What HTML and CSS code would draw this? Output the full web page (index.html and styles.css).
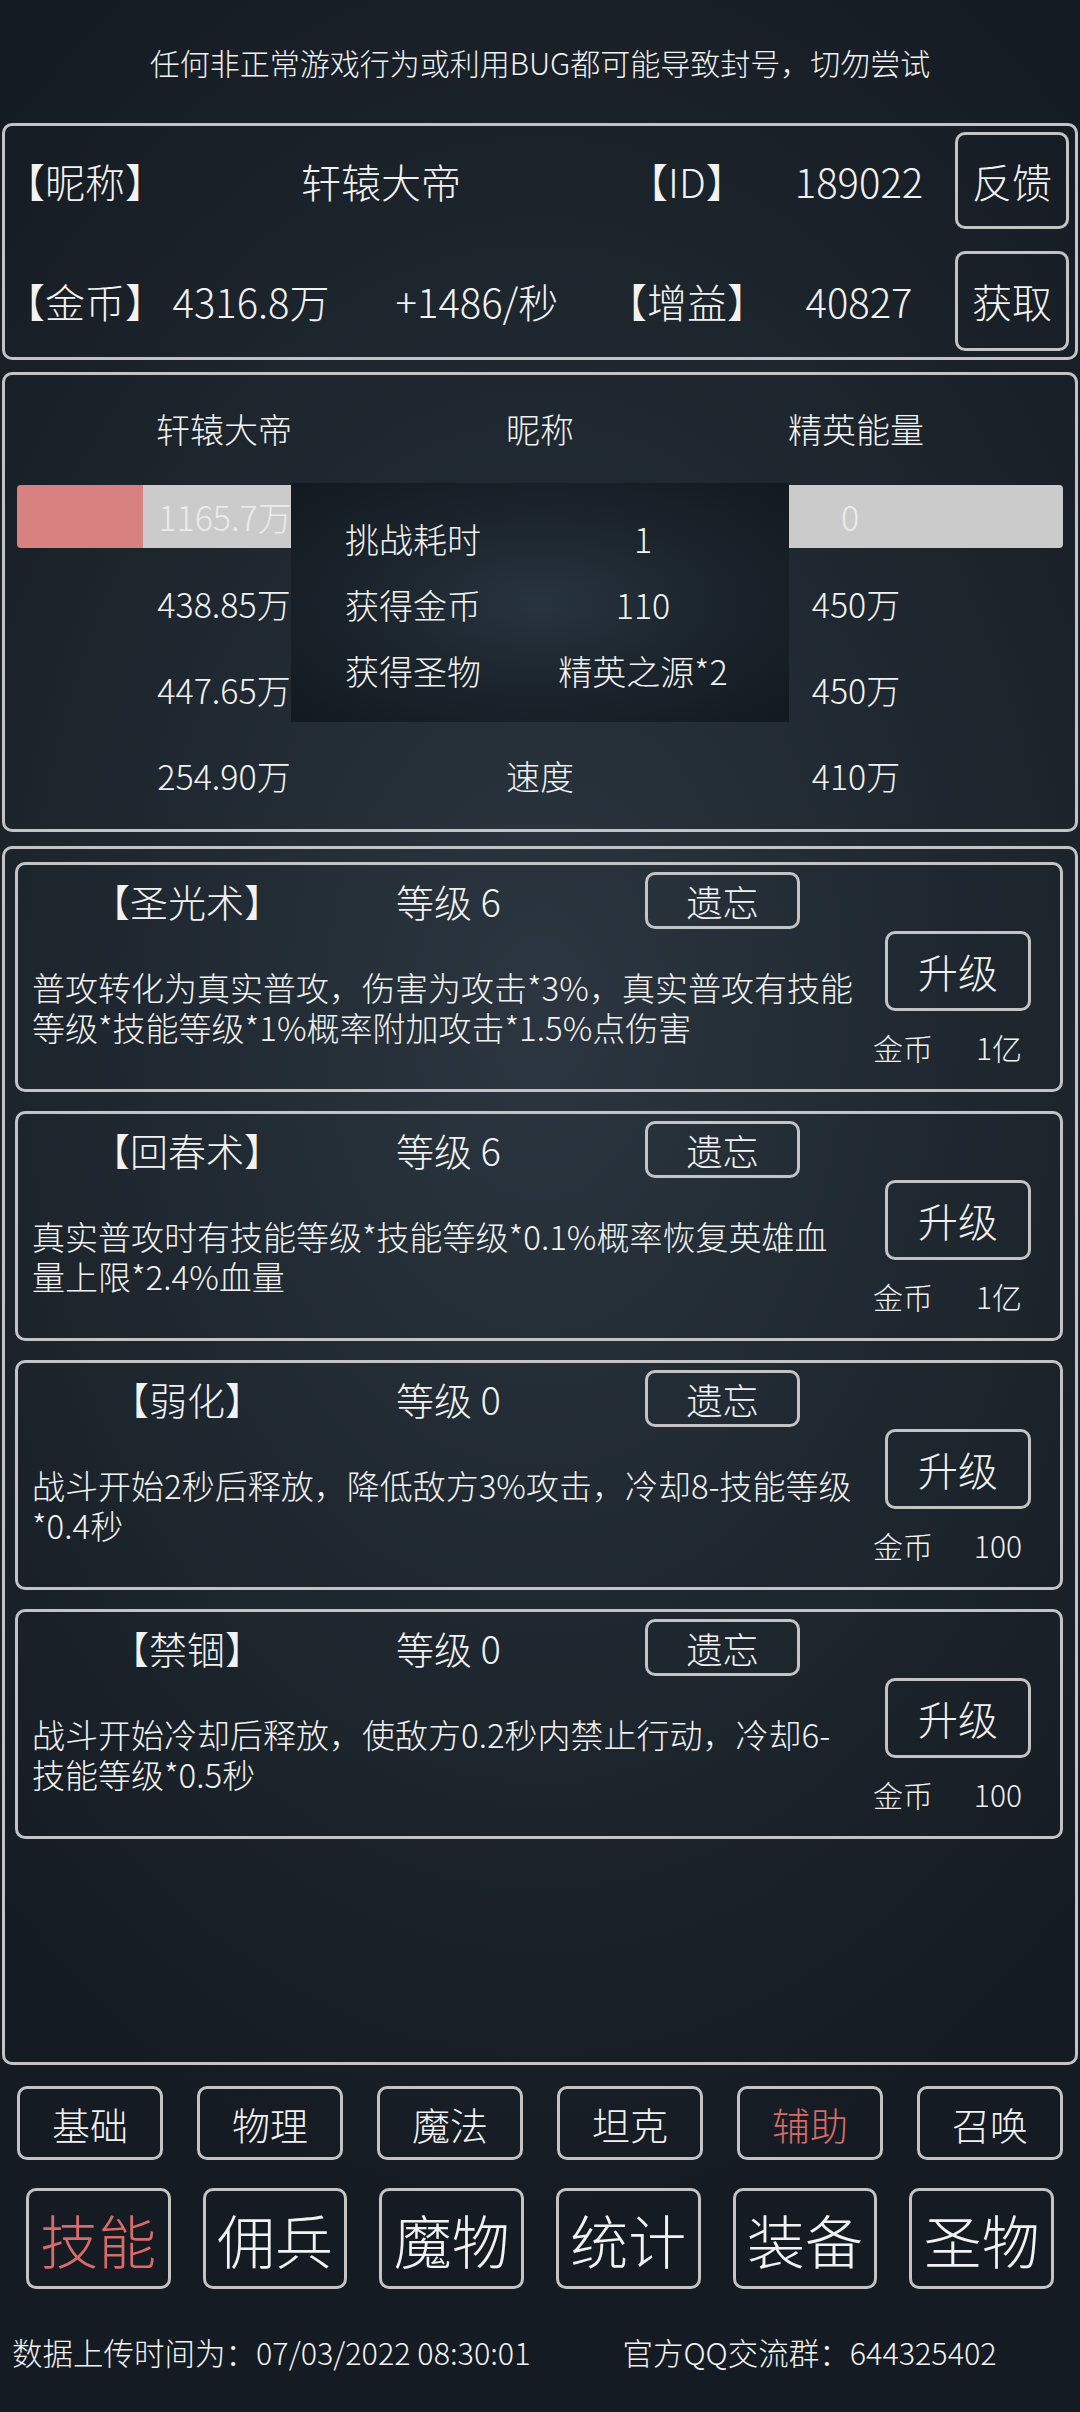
FILE: index.html
```html
<!DOCTYPE html>
<html lang="zh-CN">

<head>
  <meta charset="UTF-8" />
  <meta name="viewport" content="width=device-width, initial-scale=1" />
  <title>技能</title>
  <link rel="stylesheet" href="styles.css">
</head>

<body>
  <p class="notice">任何非正常游戏行为或利用BUG都可能导致封号，切勿尝试</p>

  <section class="panel info">
    <span>【昵称】</span>
    <span class="wide">轩辕大帝</span>
    <span>【ID】</span>
    <span>189022</span>
    <button class="btn side-btn">反馈</button>
    <span>【金币】</span>
    <span>4316.8万</span>
    <span>+1486/秒</span>
    <span>【增益】</span>
    <span>40827</span>
    <button class="btn side-btn">获取</button>
  </section>

  <section class="panel battle">
    <span class="head">轩辕大帝</span>
    <span class="head">昵称</span>
    <span class="head">精英能量</span>

    <div class="bar bar-left"><span>1165.7万</span></div>
    <div></div>
    <div class="bar bar-right"><span>0</span></div>

    <span>438.85万</span>
    <span></span>
    <span>450万</span>
    <span>447.65万</span>
    <span></span>
    <span>450万</span>
    <span>254.90万</span>
    <span>速度</span>
    <span>410万</span>

    <div class="result">
      <span class="label">挑战耗时</span>
      <span class="value">1</span>
      <span class="label">获得金币</span>
      <span class="value">110</span>
      <span class="label">获得圣物</span>
      <span class="value">精英之源*2</span>
    </div>
  </section>

  <section class="panel skills">
    <div class="skill">
      <div class="skill-main">
        <div class="skill-head">
          <span class="skill-name">【圣光术】</span>
          <span class="skill-level">等级 6</span>
          <button class="btn forget">遗忘</button>
        </div>
        <p class="skill-desc"><span>普攻转化为真实普攻，伤害为攻击*3%，真实普攻有技能</span><span>等级*技能等级*1%概率附加攻击*1.5%点伤害</span></p>
      </div>
      <div class="skill-side">
        <button class="btn upgrade">升级</button>
        <div class="cost"><span>金币</span><span>1亿</span></div>
      </div>
    </div>

    <div class="skill">
      <div class="skill-main">
        <div class="skill-head">
          <span class="skill-name">【回春术】</span>
          <span class="skill-level">等级 6</span>
          <button class="btn forget">遗忘</button>
        </div>
        <p class="skill-desc"><span>真实普攻时有技能等级*技能等级*0.1%概率恢复英雄血</span><span>量上限*2.4%血量</span></p>
      </div>
      <div class="skill-side">
        <button class="btn upgrade">升级</button>
        <div class="cost"><span>金币</span><span>1亿</span></div>
      </div>
    </div>

    <div class="skill">
      <div class="skill-main">
        <div class="skill-head">
          <span class="skill-name">【弱化】</span>
          <span class="skill-level">等级 0</span>
          <button class="btn forget">遗忘</button>
        </div>
        <p class="skill-desc"><span>战斗开始2秒后释放，降低敌方3%攻击，冷却8-技能等级</span><span>*0.4秒</span></p>
      </div>
      <div class="skill-side">
        <button class="btn upgrade">升级</button>
        <div class="cost"><span>金币</span><span>100</span></div>
      </div>
    </div>

    <div class="skill">
      <div class="skill-main">
        <div class="skill-head">
          <span class="skill-name">【禁锢】</span>
          <span class="skill-level">等级 0</span>
          <button class="btn forget">遗忘</button>
        </div>
        <p class="skill-desc"><span>战斗开始冷却后释放，使敌方0.2秒内禁止行动，冷却6-</span><span>技能等级*0.5秒</span></p>
      </div>
      <div class="skill-side">
        <button class="btn upgrade">升级</button>
        <div class="cost"><span>金币</span><span>100</span></div>
      </div>
    </div>
  </section>

  <nav class="tabs">
    <button class="btn tab">基础</button>
    <button class="btn tab">物理</button>
    <button class="btn tab">魔法</button>
    <button class="btn tab">坦克</button>
    <button class="btn tab active">辅助</button>
    <button class="btn tab">召唤</button>
  </nav>

  <nav class="menu">
    <button class="btn menu-btn active">技能</button>
    <button class="btn menu-btn">佣兵</button>
    <button class="btn menu-btn">魔物</button>
    <button class="btn menu-btn">统计</button>
    <button class="btn menu-btn">装备</button>
    <button class="btn menu-btn">圣物</button>
  </nav>

  <footer>
    <span>数据上传时间为：07/03/2022 08:30:01</span>
    <span>官方QQ交流群：644325402</span>
  </footer>
</body>

</html>
```

FILE: styles.css
```css
body {
  margin: 0;
  width: 1080px;
  height: 2412px;
  overflow: hidden;
  font-family: "Noto Sans CJK SC", "Noto Sans", sans-serif;
  font-weight: 300;
  color: #f2f2f2;
  background: radial-gradient(ellipse 75% 50% at 50% 42%, #2b3640 0%, #1f2830 50%, #151b22 100%);
}

.btn {
  font-family: inherit;
  font-weight: inherit;
  color: #f2f2f2;
  background: transparent;
  border: 3px solid #c3c3c3;
  border-radius: 10px;
  padding: 0;
  box-sizing: border-box;
}

.notice {
  margin: 0;
  height: 123px;
  display: flex;
  align-items: center;
  justify-content: center;
  font-size: 30px;
}

.panel {
  margin: 0 2px;
  border: 3px solid #c3c3c3;
  border-radius: 10px;
  box-sizing: border-box;
}

/* player info */
.info {
  display: grid;
  grid-template-columns: 150px 192px 260px 160px 184px 1fr;
  grid-template-rows: 97px 100px;
  row-gap: 22px;
  padding: 6px 6px 6px 0;
  justify-items: center;
  align-items: center;
  font-size: 40px;
}

.info .wide {
  grid-column: 2 / 4;
}

.side-btn {
  justify-self: end;
  width: 114px;
  height: 100%;
  font-size: 40px;
}

/* battle stats */
.battle {
  position: relative;
  margin-top: 12px;
  height: 460px;
  padding-top: 14px;
  display: grid;
  grid-template-columns: 438px 194px 1fr;
  grid-template-rows: 96px 75px repeat(3, 86px);
  justify-items: center;
  align-items: center;
  font-size: 34px;
}

.battle .head {
  align-self: start;
  line-height: 80px;
}

.bar {
  align-self: start;
  height: 63px;
  justify-self: stretch;
  display: flex;
  align-items: center;
  justify-content: center;
  color: #ececec;
  background: #cbcbcb;
  border-radius: 4px;
}

.bar-left {
  margin-left: 12px;
  background: linear-gradient(to right, #d78181 0, #d78181 126px, #cbcbcb 126px);
}

.bar-left span {
  margin-right: 10px;
}

.bar-right {
  margin-right: 12px;
}

.result {
  position: absolute;
  left: 286px;
  top: 108px;
  width: 498px;
  height: 239px;
  box-sizing: border-box;
  padding: 22px 0 0 54px;
  display: grid;
  grid-template-columns: 195px 206px;
  grid-auto-rows: 66px;
  align-items: center;
  background: radial-gradient(ellipse at 50% 50%, #27333e 0%, #1a232b 55%, #121920 100%);
}

.result .value {
  text-align: center;
}

/* skills */
.skills {
  margin-top: 14px;
  height: 1219px;
  padding: 13px 12px 0 10px;
  display: flex;
  flex-direction: column;
  gap: 19px;
}

.skill {
  height: 230px;
  box-sizing: border-box;
  border: 3px solid #c3c3c3;
  border-radius: 10px;
  padding: 0 17px 0 14px;
  display: grid;
  grid-template-columns: 1fr 170px;
}

.skill-head {
  margin-top: 7px;
  height: 57px;
  display: flex;
  align-items: center;
  font-size: 38px;
}

.skill-name {
  width: 310px;
  text-align: center;
}

.skill-level {
  margin-left: 54px;
  width: 249px;
}

.forget {
  width: 155px;
  height: 57px;
  font-size: 36px;
}

.skill-desc {
  margin: 38px 0 0;
  display: flex;
  flex-direction: column;
  font-size: 33px;
  white-space: nowrap;
}

.skill-desc span {
  height: 40px;
  line-height: 40px;
}

.skill-side {
  padding-top: 66px;
  display: flex;
  flex-direction: column;
  align-items: center;
}

.upgrade {
  width: 146px;
  height: 80px;
  font-size: 40px;
}

.cost {
  margin-top: 18px;
  align-self: stretch;
  padding: 0 21px 0 0;
  display: flex;
  justify-content: space-between;
  line-height: 36px;
  font-size: 30px;
}

/* bottom navigation */
.tabs {
  margin-top: 21px;
  padding: 0 17px;
  display: flex;
  gap: 34px;
}

.tab {
  width: 146px;
  height: 74px;
  font-size: 38px;
}

.menu {
  margin-top: 28px;
  padding: 0 26px;
  display: flex;
  gap: 32px;
}

.menu-btn {
  width: 145px;
  height: 101px;
  font-size: 58px;
}

.btn.active {
  color: #d86a6a;
}

footer {
  margin-top: 43px;
  padding-left: 12px;
  display: flex;
  gap: 92px;
  font-size: 30.5px;
  line-height: 40px;
}
```
